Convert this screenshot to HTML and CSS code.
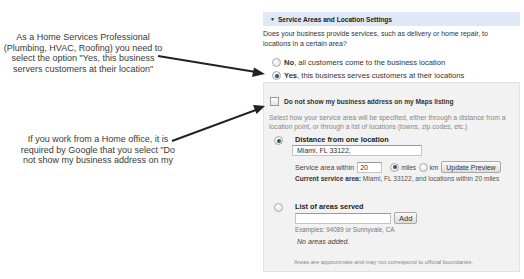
FILE: index.html
```html
<!DOCTYPE html>
<html lang="en">
<head>
  <meta charset="UTF-8">
  <title>Service Areas and Location Settings</title>
  <link rel="stylesheet" href="styles.css">
</head>
<body>
  <div class="page">
    <div class="notes">
      <p class="note note-yes">As a Home Services Professional<br>(Plumbing, HVAC, Roofing) you need to<br>select the option "Yes, this business<br>servers customers at their location"</p>
      <p class="note note-home">If you work from a Home office, it is<br>required by Google that you select "Do<br>not show my business address on my</p>
    </div>

    <section class="panel">
      <div class="panel-head"><span class="caret">▼</span> Service Areas and Location Settings</div>
      <p class="question">Does your business provide services, such as delivery or home repair, to<br>locations in a certain area?</p>
      <div class="opt"><span class="radio"></span><span><b>No</b>, all customers come to the business location</span></div>
      <div class="opt"><span class="radio on"></span><span><b>Yes</b>, this business serves customers at their locations</span></div>

      <div class="box">
        <div class="check"><span class="checkbox"></span>Do not show my business address on my Maps listing</div>
        <p class="hint">Select how your service area will be specified, either through a distance from a<br>location point, or through a list of locations (towns, zip codes, etc.)</p>

        <div class="choice">
          <span class="radio on"></span>
          <div class="choice-body">
            <div class="choice-title">Distance from one location</div>
            <div class="field field-wide">Miami, FL 33122,</div>
            <div class="row">
              <span>Service area within</span>
              <span class="field field-small">20</span>
              <span class="unit"><span class="radio on"></span>miles</span>
              <span class="unit"><span class="radio"></span>km</span>
              <span class="btn">Update Preview</span>
            </div>
            <div class="current"><b>Current service area:</b> Miami, FL 33122, and locations within 20 miles</div>
          </div>
        </div>

        <div class="choice choice-list">
          <span class="radio"></span>
          <div class="choice-body">
            <div class="choice-title">List of areas served</div>
            <div class="row row-add">
              <span class="field field-list"></span>
              <span class="btn btn-add">Add</span>
            </div>
            <div class="examples">Examples: 94089 or Sunnyvale, CA</div>
            <div class="empty">No areas added.</div>
          </div>
        </div>

        <p class="disclaimer">Areas are approximate and may not correspond to official boundaries.</p>
      </div>
    </section>

    <svg class="arrows" width="524" height="279" viewBox="0 0 524 279">
      <line x1="158" y1="56" x2="256" y2="72" stroke="#222" stroke-width="2"/>
      <polygon points="265,74 254,67.5 252,77" fill="#222"/>
      <line x1="172" y1="141" x2="256" y2="110" stroke="#222" stroke-width="2"/>
      <polygon points="265,106 253,105 256.5,114" fill="#222"/>
    </svg>
  </div>
</body>
</html>
```

FILE: styles.css
```css
body {
  margin: 0;
  background: #fff;
  font-family: "Liberation Sans", Arial, sans-serif;
  color: #333;
}
.page {
  position: relative;
  display: flex;
  width: 524px;
  height: 279px;
  overflow: hidden;
}
.notes { width: 263px; flex: none; }
.note {
  margin: 0;
  font-size: 9px;
  line-height: 10.7px;
  color: #3a3a3a;
  text-align: center;
  white-space: nowrap;
  width: 160px;
}
.note-yes { margin-top: 32px; margin-left: 3px; }
.note-home { margin-top: 59px; margin-left: 18px; }

.panel { width: 257px; flex: none; padding-top: 12px; font-size: 7px; white-space: nowrap; }
.panel-head {
  height: 14px;
  background: #dfe8f6;
  display: flex;
  align-items: center;
  gap: 3px;
  padding-left: 7px;
  font-weight: bold;
  font-size: 6.6px;
  color: #222;
}
.caret { font-size: 5px; }
.question { margin: 3px 0 0; line-height: 10px; color: #333; }
.opt {
  display: flex;
  align-items: center;
  gap: 3px;
  height: 13px;
  padding-left: 9px;
  color: #333;
  font-size: 7.6px;
}
.question + .opt { margin-top: 7px; }

.radio {
  width: 7px;
  height: 7px;
  border: 1px solid #aaa;
  border-radius: 50%;
  background: radial-gradient(circle at 40% 35%, #fff, #ddd);
  flex: none;
  display: inline-flex;
  align-items: center;
  justify-content: center;
}
.radio.on::after {
  content: "";
  width: 4px;
  height: 4px;
  border-radius: 50%;
  background: #3d5566;
}
.checkbox {
  width: 7px;
  height: 7px;
  border: 1px solid #999;
  background: linear-gradient(#fff, #e4e4e4);
  flex: none;
}

.box {
  margin-top: 0;
  background: #f2f2f2;
  border: 1px solid #e2e2e2;
  padding: 12px 5px 4px;
}
.check {
  display: flex;
  align-items: center;
  gap: 5px;
  height: 12px;
  padding-left: 1px;
  font-size: 6.6px;
  font-weight: bold;
  color: #333;
}
.hint { margin: 6px 0 0; line-height: 9px; color: #888; font-size: 6.8px; }

.choice { display: flex; gap: 12px; margin-top: 4px; padding-left: 5px; }
.choice > .radio { margin-top: 1px; }
.choice-list { margin-top: 18px; }
.choice-body { display: flex; flex-direction: column; }
.choice-title { line-height: 10px; font-weight: bold; font-size: 7.3px; color: #222; }

.field {
  display: flex;
  align-items: center;
  height: 11px;
  box-sizing: border-box;
  background: #fff;
  border: 1px solid #c4c4c4;
  border-top-color: #999;
  padding-left: 2px;
  color: #333;
  flex: none;
}
.field-wide { width: 130px; margin-left: -3px; padding-left: 4px; }
.field-small { width: 25px; }
.field-list { width: 96px; }

.row { display: flex; align-items: center; gap: 3px; height: 12px; margin-top: 5px; color: #444; font-size: 7px; }
.row .unit { display: flex; align-items: center; gap: 2px; margin-left: 5px; font-size: 6.3px; }
.row .unit + .unit { margin-left: 0; }
.row .btn { margin-left: 0; padding: 0 4px; }
.row-add { margin-top: 0; }
.btn {
  display: flex;
  align-items: center;
  height: 12px;
  box-sizing: border-box;
  padding: 0 5px;
  border: 1px solid #a8a8a8;
  border-radius: 2px;
  background: linear-gradient(#fafafa, #dcdcdc);
  color: #333;
  font-size: 7px;
  flex: none;
}
.btn-add { padding: 0 6px; font-size: 7.5px; }
.current { margin-top: 1px; line-height: 10px; color: #555; font-size: 6.6px; }
.current b { color: #333; }
.examples { margin-top: 1px; line-height: 10px; font-size: 6.3px; color: #777; }
.empty { margin-top: 2px; line-height: 10px; padding-left: 2px; font-style: italic; color: #444; font-size: 7.1px; }
.disclaimer { margin: 10px 0 0 25px; line-height: 10px; font-size: 5.8px; color: #888; }

.arrows { position: absolute; left: 0; top: 0; pointer-events: none; }
```
